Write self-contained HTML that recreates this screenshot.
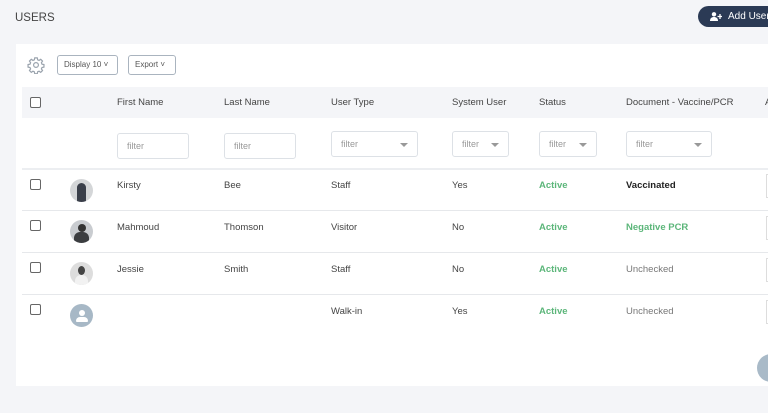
<!DOCTYPE html>
<html><head><style>
*{margin:0;padding:0;box-sizing:border-box}
body{width:768px;height:413px;overflow:hidden;background:#f4f5f8;font-family:"Liberation Sans",sans-serif;color:#444;position:relative;font-size:9.5px}
.a{position:absolute}
.title{left:15px;top:12px;font-size:11.5px;color:#444}
.add{left:698px;top:6px;width:80px;height:21px;background:#2b3a55;border-radius:11px;color:#fff;font-size:10px;line-height:21px;padding-left:30px}
.card{left:16px;top:44px;width:760px;height:342px;background:#fff}
.btn{top:55px;height:20px;border:1px solid #aab4bf;border-radius:3px;font-size:8px;color:#555;line-height:18px;padding-left:6px}
.hdr{left:22px;top:87px;width:760px;height:31px;background:#f4f5f8}
.cb{width:11px;height:11px;border:1.3px solid #666;border-radius:2px;background:#fff}
.th{top:97px;color:#444}
.f{top:133px;height:26px;border:1px solid #dde1e6;border-radius:3px;color:#999;font-size:9px;line-height:24px;padding-left:9px}
.f.s{top:131px}
.car{position:absolute;right:9px;top:11px;border-left:4px solid transparent;border-right:4px solid transparent;border-top:4px solid #999}
.line{left:22px;width:760px;height:1px;background:#e6e8eb}
.av{width:23px;height:23px;border-radius:50%;background:#c9ccd0;overflow:hidden}
.act{color:#5cb67a}
.rb{left:766px;width:3px;height:24px;border:1px solid #ddd}
</style></head><body>
<div class="a title">USERS</div>
<div class="a add"><svg class="a" style="left:12px;top:6px" width="12" height="9" viewBox="0 0 12 9"><circle cx="4" cy="2.3" r="2.2" fill="#fff"/><path d="M0 9c0-3 1.8-4 4-4s4 1 4 4z" fill="#fff"/><path d="M10 2v5M7.5 4.5h5" stroke="#fff" stroke-width="1.3"/></svg>Add User</div>
<div class="a card"></div>
<svg class="a" style="left:27px;top:56px" width="18" height="18" viewBox="0 0 24 24" fill="none" stroke="#9aa3ad" stroke-width="1.6"><circle cx="12" cy="12" r="3.2"/><path d="M10.3 2.5h3.4l.5 2.6 1.9.8 2.2-1.5 2.4 2.4-1.5 2.2.8 1.9 2.6.5v3.4l-2.6.5-.8 1.9 1.5 2.2-2.4 2.4-2.2-1.5-1.9.8-.5 2.6h-3.4l-.5-2.6-1.9-.8-2.2 1.5-2.4-2.4 1.5-2.2-.8-1.9-2.6-.5v-3.4l2.6-.5.8-1.9-1.5-2.2 2.4-2.4 2.2 1.5 1.9-.8z"/></svg>
<div class="a btn" style="left:57px;width:61px">Display 10 ˅</div>
<div class="a btn" style="left:128px;width:48px">Export ˅</div>
<div class="a hdr"></div>
<div class="a cb" style="left:30px;top:97px"></div>
<div class="a th" style="left:117px">First Name</div>
<div class="a th" style="left:224px">Last Name</div>
<div class="a th" style="left:331px">User Type</div>
<div class="a th" style="left:452px">System User</div>
<div class="a th" style="left:539px">Status</div>
<div class="a th" style="left:626px">Document - Vaccine/PCR</div>
<div class="a th" style="left:765px">A</div>
<div class="a f" style="left:117px;width:72px">filter</div>
<div class="a f" style="left:224px;width:72px">filter</div>
<div class="a f s" style="left:331px;width:87px">filter<i class="car"></i></div>
<div class="a f s" style="left:452px;width:57px">filter<i class="car"></i></div>
<div class="a f s" style="left:539px;width:58px">filter<i class="car"></i></div>
<div class="a f s" style="left:626px;width:86px">filter<i class="car"></i></div>
<div class="a line" style="top:168px;height:2px;background:#eceef1"></div>
<div class="a line" style="top:210px"></div>
<div class="a line" style="top:252px"></div>
<div class="a line" style="top:294px"></div>

<div class="a cb" style="left:30px;top:179px"></div>
<div class="a av" style="left:70px;top:179px;background:#d4d6d8"><div class="a" style="left:7px;top:4px;width:9px;height:19px;border-radius:5px 5px 2px 2px;background:#3a3f4a"></div></div>
<div class="a" style="left:117px;top:180px">Kirsty</div><div class="a" style="left:224px;top:180px">Bee</div><div class="a" style="left:331px;top:180px">Staff</div><div class="a" style="left:452px;top:180px">Yes</div><div class="a act" style="left:539px;top:180px;font-weight:bold">Active</div><div class="a" style="left:626px;top:180px;color:#222;font-weight:bold">Vaccinated</div>
<div class="a rb" style="top:174px"></div>

<div class="a cb" style="left:30px;top:220px"></div>
<div class="a av" style="left:70px;top:220px"><div class="a" style="left:8px;top:4px;width:8px;height:8px;border-radius:50%;background:#333"></div><div class="a" style="left:4px;top:12px;width:15px;height:12px;border-radius:6px 6px 0 0;background:#3b3d40"></div></div>
<div class="a" style="left:117px;top:222px">Mahmoud</div><div class="a" style="left:224px;top:222px">Thomson</div><div class="a" style="left:331px;top:222px">Visitor</div><div class="a" style="left:452px;top:222px">No</div><div class="a act" style="left:539px;top:222px;font-weight:bold">Active</div><div class="a act" style="left:626px;top:222px;font-weight:bold">Negative PCR</div>
<div class="a rb" style="top:216px"></div>

<div class="a cb" style="left:30px;top:262px"></div>
<div class="a av" style="left:70px;top:262px;background:#ddd"><div class="a" style="left:8px;top:4px;width:7px;height:9px;border-radius:50%;background:#444"></div><div class="a" style="left:5px;top:13px;width:13px;height:11px;border-radius:6px 6px 0 0;background:#f2f2f2"></div></div>
<div class="a" style="left:117px;top:264px">Jessie</div><div class="a" style="left:224px;top:264px">Smith</div><div class="a" style="left:331px;top:264px">Staff</div><div class="a" style="left:452px;top:264px">No</div><div class="a act" style="left:539px;top:264px;font-weight:bold">Active</div><div class="a" style="left:626px;top:264px;color:#777">Unchecked</div>
<div class="a rb" style="top:258px"></div>

<div class="a cb" style="left:30px;top:304px"></div>
<div class="a av" style="left:70px;top:304px;background:#a7b8c6"><div class="a" style="left:9px;top:6px;width:6px;height:6px;border-radius:50%;background:#fff"></div><div class="a" style="left:6px;top:13px;width:12px;height:5px;border-radius:4px 4px 1px 1px;background:#fff"></div></div>
<div class="a" style="left:331px;top:306px">Walk-in</div><div class="a" style="left:452px;top:306px">Yes</div><div class="a act" style="left:539px;top:306px;font-weight:bold">Active</div><div class="a" style="left:626px;top:306px;color:#777">Unchecked</div>
<div class="a rb" style="top:300px"></div>
<div class="a" style="left:757px;top:354px;width:28px;height:28px;border-radius:50%;background:#a9bac8"></div>
</body></html>
